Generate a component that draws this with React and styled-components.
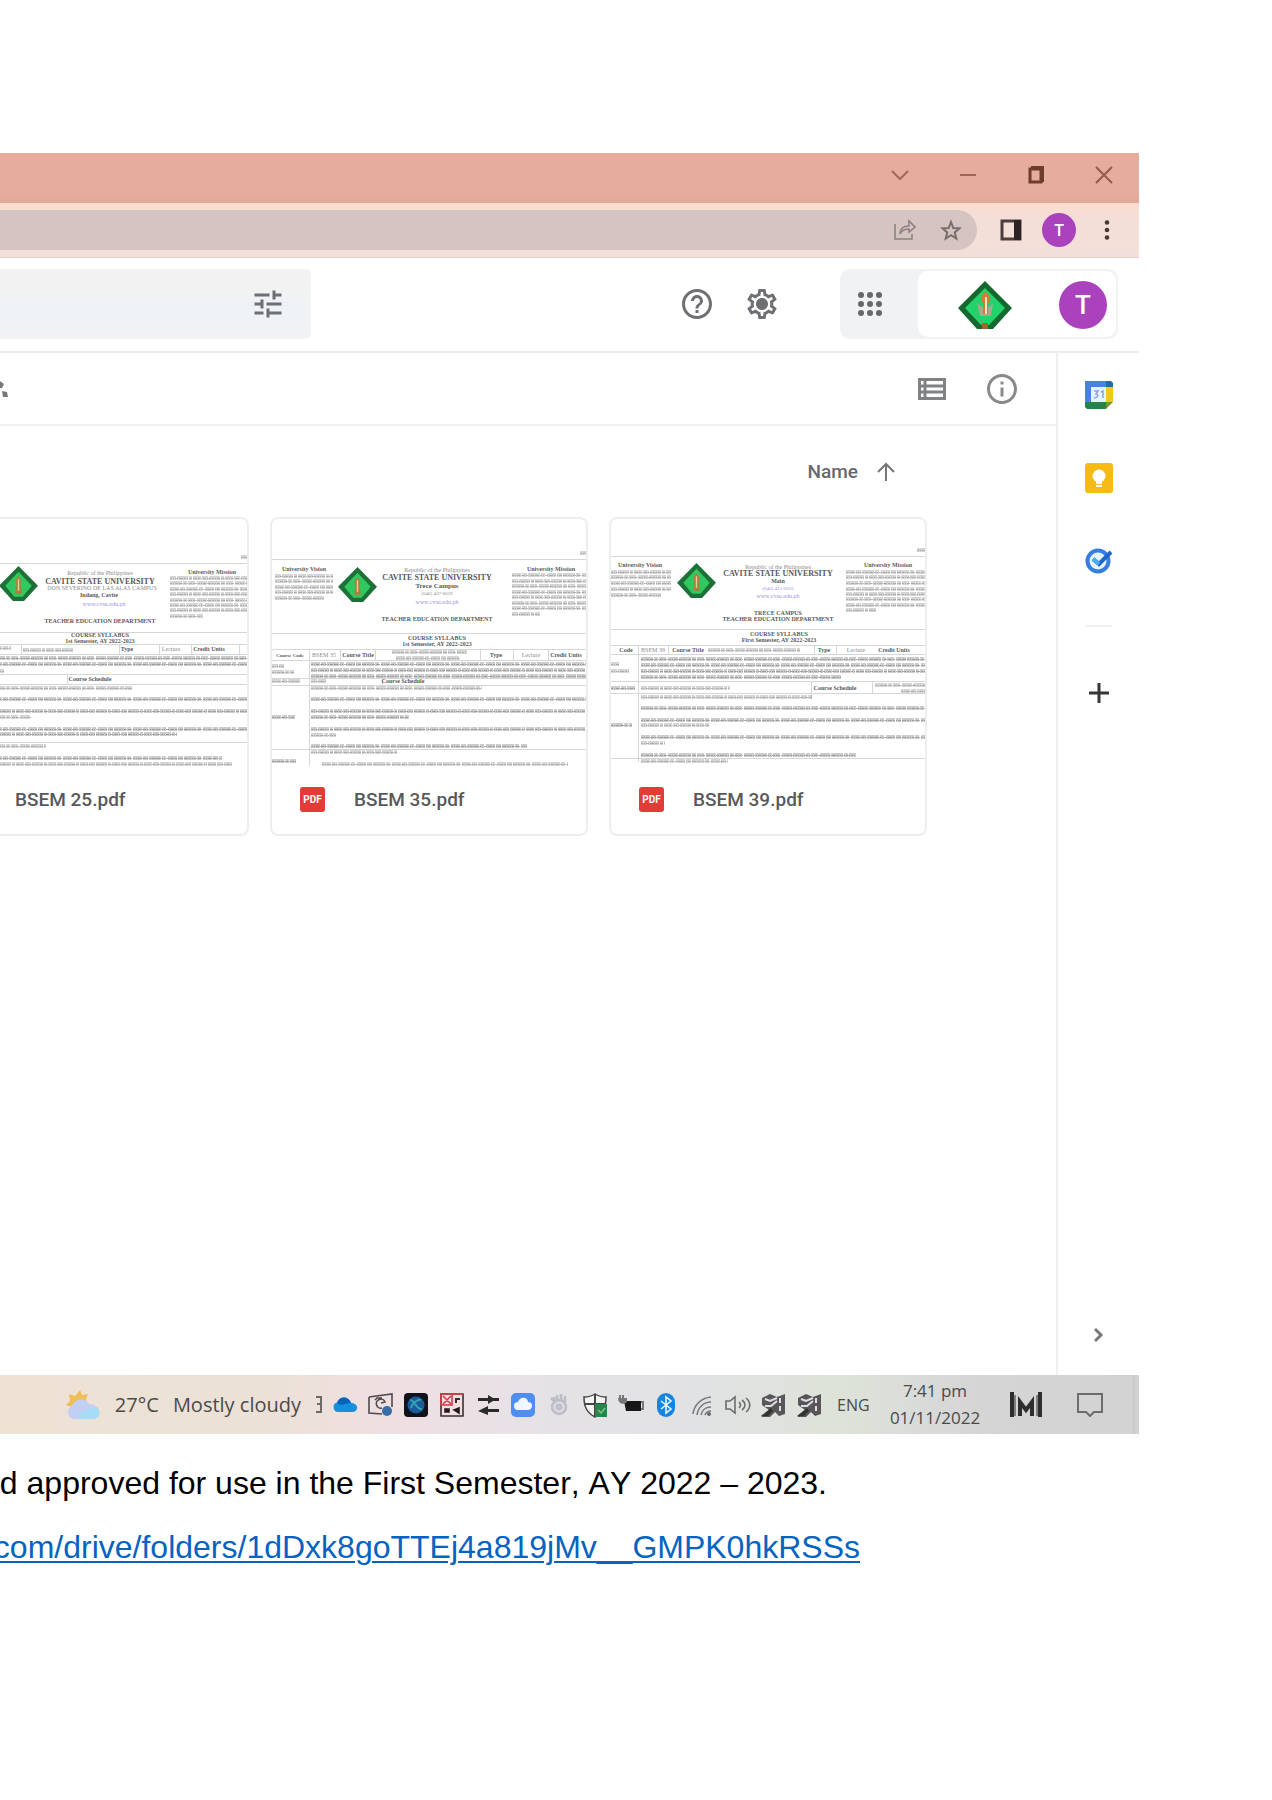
import React from "react";
import styled, { createGlobalStyle } from "styled-components";
import { MdTune, MdHelpOutline, MdOutlineSettings, MdInfoOutline } from "react-icons/md";

const GlobalStyle = createGlobalStyle`
  * { box-sizing: border-box; }
  html, body { margin: 0; background: #fff; }
  body { font-family: Roboto, "Liberation Sans", sans-serif; color: #5f6368; overflow-x: hidden; }
  svg { display: block; flex: none; }
`;

const Page = styled.main`
  min-height: 1800px;
  padding-top: 153px;
  overflow: hidden;
`;

const BrowserWindow = styled.section`
  width: calc(100% - 133px);
  background: #fff;
`;

const IconButton = styled.button`
  display: flex;
  align-items: center;
  justify-content: center;
  flex: none;
  width: ${(p) => p.$w || 48}px;
  height: ${(p) => p.$h || 48}px;
  padding: 0;
  border: 0;
  background: transparent;
  color: ${(p) => p.$color || "#6d6f72"};
`;

const TitleBar = styled.header`
  display: flex;
  justify-content: flex-end;
  align-items: center;
  height: 50px;
  padding: 0 1px 6px 0;
  background: linear-gradient(#e6ac9c 0 80%, #dfa995);
`;

const AddressRow = styled.div`
  display: flex;
  align-items: center;
  gap: 10px;
  height: 55px;
  padding-right: 8px;
  background: linear-gradient(#fbddcd, #f5ded8 25%, #f3dfd9);
  border-bottom: 1px solid #e3cfc8;
`;

const AddressPill = styled.div`
  display: flex;
  align-items: center;
  flex: 1;
  height: 40px;
  padding-right: 3px;
  border-radius: 0 20px 20px 0;
  background: #d5c4c2;
`;

const BrowserActions = styled.div`
  display: flex;
`;

const BareInput = styled.input`
  flex: 1;
  min-width: 0;
  height: 100%;
  border: 0;
  outline: 0;
  background: transparent;
  font: 20px Roboto, sans-serif;
`;

const Avatar = styled.span`
  display: flex;
  align-items: center;
  justify-content: center;
  width: ${(p) => p.$size}px;
  height: ${(p) => p.$size}px;
  border-radius: 50%;
  background: #ab42bd;
  color: #fff;
  font-family: Roboto, sans-serif;
  font-weight: 500;
  font-size: ${(p) => (p.$size > 40 ? 26 : 16)}px;
`;

const DriveHeader = styled.div`
  display: flex;
  align-items: center;
  height: 95px;
  padding: 0 21px 2px 0;
  border-bottom: 2px solid #ededee;
`;

const SearchBox = styled.div`
  display: flex;
  align-items: center;
  width: 311px;
  height: 70px;
  padding-right: 19px;
  border-radius: 0 6px 6px 0;
  background: linear-gradient(#f2f2f2 0 30%, #eff3f5 40% 85%, #f2f2f2);
`;

const HeaderActions = styled.div`
  display: flex;
  margin: 0 46px 0 auto;
`;

const AccountGroup = styled.div`
  display: flex;
  width: 278px;
  height: 70px;
  padding: 2px;
  border-radius: 10px;
  background: #f0f2f3;
`;

const AccountPanel = styled.div`
  display: flex;
  align-items: center;
  flex: 1;
  margin-left: 20px;
  justify-content: flex-end;
  gap: 46px;
  padding: 3px 9px 0 0;
  border-radius: 10px;
  background: #fff;
`;

const DriveBody = styled.div`
  display: flex;
  height: 1022px;
`;

const Content = styled.div`
  flex: 1;
  min-width: 0;
  border-right: 2px solid #efefef;
`;

const Toolbar = styled.div`
  display: flex;
  align-items: center;
  height: 73px;
  padding-right: 19px;
  border-bottom: 2px solid #f0f0f0;
`;

const ToolbarEnd = styled.div`
  display: flex;
  margin-left: auto;
`;

const SortRow = styled.div`
  display: flex;
  justify-content: flex-end;
  align-items: center;
  height: 91px;
  padding-right: 159px;
`;

const SortButton = styled.button`
  display: flex;
  align-items: center;
  gap: 17px;
  padding: 0;
  border: 0;
  background: transparent;
  color: #68696c;
  font: 500 19px/24px Roboto, sans-serif;
`;

const FileGrid = styled.ul`
  display: flex;
  gap: 21px;
  margin: 0 0 0 -69px;
  padding: 0;
  list-style: none;
`;

const FileCard = styled.li`
  flex: none;
  width: 318px;
  height: 319px;
  overflow: hidden;
  border: 2px solid #eeeeef;
  border-radius: 8px;
`;

const FileCaption = styled.div`
  display: flex;
  align-items: center;
  gap: 29px;
  height: 68px;
  padding: 0 0 1px 28px;
  color: #58595b;
  font: 500 19px/24px Roboto, sans-serif;
`;

const PdfBadge = styled.span`
  display: flex;
  align-items: center;
  justify-content: center;
  width: 25px;
  height: 25px;
  border-radius: 3px;
  background: #e33b38;
  color: #fff;
  font: 700 10px/12px Roboto, sans-serif;
`;

const SidePanel = styled.aside`
  display: flex;
  flex-direction: column;
  align-items: center;
  width: 81px;
  padding-bottom: 16px;
`;

const AppLinks = styled.nav`
  display: flex;
  flex-direction: column;
`;

const Divider = styled.hr`
  width: 27px;
  height: 2px;
  margin: 24px 0 22px;
  border: 0;
  background: #f1f1f1;
`;

const Spacer = styled.div`
  flex: 1;
`;

const Taskbar = styled.footer`
  display: flex;
  justify-content: flex-end;
  align-items: center;
  height: 59px;
  background: linear-gradient(90deg, #ede2d4 0%, #ece1d7 24%, #efdfe3 36%, #e5e2e6 48%, #e1e2e3 62%, #dde3d8 74%, #dadcd9 80%, #d5d5d5 86%, #d2d2d2 100%);
  color: #4c4a48;
  font: 20px/26px "Open Sans", "Noto Sans", sans-serif;
`;

const Weather = styled.div`
  display: flex;
  align-items: center;
  gap: 14px;
  white-space: nowrap;
`;

const Tray = styled.div`
  display: flex;
  align-items: center;
  justify-content: space-between;
  width: 490px;
  margin: 0 15px 0 9px;
`;

const Language = styled.span`
  width: 34px;
  font-size: 16px;
`;

const Clock = styled.time`
  width: 92px;
  margin: 0 28px 0 18px;
  padding-bottom: 2px;
  text-align: center;
  font-size: 17px;
  line-height: 27px;
  white-space: nowrap;
`;

const TaskbarEnd = styled.div`
  display: flex;
  align-items: center;
  gap: 32px;
`;

const PeekEdge = styled.div`
  width: 6px;
  height: 59px;
  margin-left: 28px;
  border-left: 2px solid #c9c9c9;
`;

const DocumentText = styled.p`
  display: flex;
  justify-content: flex-end;
  width: ${(p) => p.$end}px;
  margin: ${(p) => p.$top}px 0 0;
  color: #000;
  font: 32px/40px "Liberation Sans", Arial, sans-serif;
  font-kerning: none;
  white-space: nowrap;
`;

const DocLink = styled.a`
  color: #0563c1;
  text-decoration: underline;
  text-decoration-thickness: 2px;
  text-underline-offset: 3px;
`;

function Emblem() {
  return (
    <svg width="56" height="48" viewBox="0 0 56 48" aria-hidden="true">
      <path d="M28 0 55 27 36 48H20L1 27Z" fill="#14692f" />
      <path d="M28 7 48 27 32 44h-8L8 27Z" fill="#21d36b" />
      <path d="m20 22 5 4h7l4-4-2 13H23Z" fill="#a5a98d" />
      <path d="M28 11c6 3 7 8 3 12v10h-5V22c-3-3-2-8 2-11Z" fill="#d87a35" />
      <path d="M29 16v17" stroke="#f5e6bb" strokeWidth="2" />
      <path d="M25 42h6v6h-6Z" fill="#a5632a" />
    </svg>
  );
}

function SettingsIcon() {
  return (
    <svg width="36" height="36" viewBox="0 0 24 24">
      <MdOutlineSettings size={24} />
      <circle cx="12" cy="12" r="3" fill="currentColor" />
    </svg>
  );
}

const greekDash = ["9 1 5 1 12 1 4 2", "6 1 11 1 3 1 8 1", "12 1 4 1 7 2 10 1"];

function Lines({ rows }) {
  return rows.map(([x1, x2, y, strong], i) => (
    <g key={i} stroke={strong ? "#858588" : "#9a9a9d"}>
      <path d={`M${x1} ${y}H${x2}`} strokeWidth="4" strokeOpacity=".42" strokeDasharray={greekDash[i % 3]} />
      <path d={`M${x1} ${y + 0.5}H${x2}`} strokeWidth="1" strokeOpacity=".65" strokeDasharray="2 1 1 1 3 1 4 1" />
    </g>
  ));
}

function Rules({ h, v }) {
  return (
    <g stroke="#d3d7d9">
      {h.map(([x1, x2, y]) => <path key={`${x1}-${y}`} d={`M${x1} ${y + 0.5}H${x2}`} />)}
      {v.map(([x, y1, y2]) => <path key={`${x}-${y1}v`} d={`M${x + 0.5} ${y1}V${y2}`} />)}
    </g>
  );
}

function Heads({ items }) {
  return items.map(([text, x, y, size, kind]) => (
    <text
      key={`${text}${y}`}
      x={x}
      y={y}
      fontSize={size}
      textAnchor="middle"
      fontWeight={kind === "b" ? 700 : 400}
      fill={kind === "l" ? "#9a94e6" : kind === "b" ? "#5a5a5c" : "#8b8b8e"}
    >
      {text}
    </text>
  ));
}

const column = (x1, x2, ys, last) => ys.map((y, i) => [x1, i === ys.length - 1 ? last : x2, y]);

const files = [
  {
    name: "BSEM 25.pdf",
    offscreenBadge: true,
    logo: 47,
    heads: [
      ["Republic of the Philippines", 167, 56, 6],
      ["CAVITE STATE UNIVERSITY", 167, 65, 8, "b"],
      ["DON SEVERINO DE LAS ALAS CAMPUS", 169, 71, 6],
      ["Indang, Cavite", 166, 78, 6, "b"],
      ["www.cvsu.edu.ph", 171, 87, 6, "l"],
      ["TEACHER EDUCATION DEPARTMENT", 167, 104, 6, "b"],
      ["University Mission", 279, 55, 6, "b"],
      ["COURSE SYLLABUS", 167, 118, 6, "b"],
      ["1st Semester, AY 2022-2023", 167, 124, 6, "b"],
      ["Type", 194, 132, 6, "b"],
      ["Lecture", 238, 132, 6],
      ["Credit Units", 276, 132, 6, "b"],
      ["Course Schedule", 157, 162, 6, "b"],
    ],
    lines: [
      [308, 316, 38],
      ...column(237, 316, [59, 64, 70, 75, 81, 86, 91, 97], 270),
      [60, 78, 129], [90, 140, 131], [60, 314, 139, 1], [60, 316, 145, 1], [60, 71, 152],
      [60, 199, 169], [60, 316, 180, 1], [60, 316, 192, 1], [60, 98, 198],
      [60, 315, 210, 1], [60, 244, 215, 1], [60, 113, 227], [60, 289, 239, 1], [60, 299, 245],
    ],
    h: [[0, 317, 44], [0, 317, 113], [0, 317, 125], [0, 317, 135], [0, 317, 155], [0, 317, 165], [0, 317, 223]],
    v: [[88, 125, 135], [186, 125, 135], [226, 125, 135], [258, 125, 135], [306, 125, 135], [134, 155, 165]],
  },
  {
    name: "BSEM 35.pdf",
    logo: 48,
    heads: [
      ["University Vision", 32, 52, 6, "b"],
      ["Republic of the Philippines", 165, 53, 6],
      ["CAVITE STATE UNIVERSITY", 165, 61, 8, "b"],
      ["Trece Campus", 165, 69, 7, "b"],
      ["(046) 437-6659", 165, 76, 5],
      ["www.cvsu.edu.ph", 165, 85, 6, "l"],
      ["TEACHER EDUCATION DEPARTMENT", 165, 102, 6, "b"],
      ["University Mission", 279, 52, 6, "b"],
      ["COURSE SYLLABUS", 165, 121, 6, "b"],
      ["1st Semester, AY 2022-2023", 165, 127, 6, "b"],
      ["Course Code", 18, 138, 5, "b"],
      ["BSEM 35", 52, 138, 6],
      ["Course Title", 86, 138, 6, "b"],
      ["Type", 224, 138, 6, "b"],
      ["Lecture", 259, 138, 6],
      ["Credit Units", 294, 138, 6, "b"],
      ["Course Schedule", 131, 164, 6, "b"],
    ],
    lines: [
      [308, 316, 34],
      ...column(3, 61, [57, 62, 68, 73, 79], 52),
      ...column(240, 316, [56, 62, 67, 73, 78, 84, 89, 95], 268),
      [120, 195, 133], [124, 188, 139], [0, 12, 147], [0, 22, 153], [39, 314, 145, 1], [39, 316, 151, 1], [39, 316, 157, 1],
      [0, 28, 162], [39, 54, 162], [39, 210, 169], [39, 315, 180, 1], [39, 315, 192, 1], [39, 137, 198, 1], [0, 23, 198, 1],
      [39, 315, 210, 1], [39, 64, 216], [39, 255, 227, 1], [39, 125, 233], [0, 24, 242, 1], [50, 296, 245],
    ],
    h: [[0, 317, 40], [0, 317, 114], [0, 317, 130], [0, 317, 141], [0, 317, 159], [0, 317, 166], [0, 317, 230]],
    v: [[37, 130, 247], [68, 130, 141], [103, 130, 141], [208, 130, 141], [241, 130, 141], [276, 130, 141], [110, 159, 166]],
  },
  {
    name: "BSEM 39.pdf",
    logo: 44,
    heads: [
      ["University Vision", 29, 48, 6, "b"],
      ["Republic of the Philippines", 167, 50, 6],
      ["CAVITE STATE UNIVERSITY", 167, 57, 8, "b"],
      ["Main", 167, 64, 6, "b"],
      ["(046) 415-0010", 167, 71, 5, "l"],
      ["www.cvsu.edu.ph", 167, 79, 6, "l"],
      ["TRECE CAMPUS", 167, 96, 6, "b"],
      ["TEACHER EDUCATION DEPARTMENT", 167, 102, 6, "b"],
      ["University Mission", 277, 48, 6, "b"],
      ["COURSE SYLLABUS", 168, 117, 6, "b"],
      ["First Semester, AY 2022-2023", 168, 123, 6, "b"],
      ["Code", 15, 133, 6, "b"],
      ["BSEM 39", 42, 133, 6],
      ["Course Title", 77, 133, 6, "b"],
      ["Type", 213, 133, 6, "b"],
      ["Lecture", 245, 133, 6],
      ["Credit Units", 283, 133, 6, "b"],
      ["Course Schedule", 224, 171, 6, "b"],
    ],
    lines: [
      [306, 316, 31],
      ...column(0, 60, [53, 58, 64, 70, 76], 50),
      ...column(235, 316, [53, 58, 64, 70, 75, 80, 86, 91], 265),
      [97, 189, 131], [0, 8, 145], [0, 18, 152], [30, 316, 140, 1], [30, 316, 146, 1], [30, 316, 152, 1], [30, 230, 158, 1],
      [0, 24, 169, 1], [30, 119, 169], [264, 316, 166], [290, 316, 172],
      [30, 201, 178], [30, 315, 189, 1], [30, 316, 201, 1], [30, 98, 206], [0, 21, 206, 1],
      [30, 316, 218, 1], [30, 54, 224], [30, 245, 236, 1], [30, 117, 242],
    ],
    h: [[0, 317, 37], [0, 317, 110], [0, 317, 126], [0, 317, 135], [0, 317, 162], [0, 317, 174], [0, 317, 239]],
    v: [[27, 126, 243], [57, 126, 135], [203, 126, 135], [225, 126, 135], [200, 162, 180], [261, 162, 174]],
  },
];

function Thumbnail({ file }) {
  return (
    <svg width="317" height="247" viewBox="0 0 317 247" role="img" aria-label={`Preview of ${file.name}`} fontFamily="Liberation Serif, serif">
      <Rules h={file.h} v={file.v} />
      <Lines rows={file.lines} />
      <Heads items={file.heads} />
      <svg x="66" y={file.logo} width="39" height="35" viewBox="0 0 56 48" preserveAspectRatio="none">
        <path d="M28 0 56 27 36 48H20L0 27Z" fill="#1d7036" />
        <path d="M28 8 47 27 34 42H22L9 27Z" fill="#2fc95f" />
        <path d="M28 14c5 4 5 8 3 11l2 13H23l2-13c-2-3-2-7 3-11Z" fill="#a8813f" />
        <path d="M28 18v16" stroke="#e6cf9b" strokeWidth="2" />
      </svg>
    </svg>
  );
}

function DeviceIcon() {
  return (
    <svg width="26" height="26" viewBox="0 0 26 26">
      <path d="M2 6 10 2l7 3 8-3v20l-6 2-4-4-5 5H1l8-7-7-5Z" fill="#59565a" />
      <path d="m5 7 5 2 7-3M5 14h6l6-5M20 6v5M20 14v5" stroke="#dedee0" strokeWidth="2" fill="none" />
      <path d="m1 24 10-8 2 3-5 5Z" fill="#333" />
    </svg>
  );
}

const trayIcons = [
  ["OneDrive", <svg width="26" height="24" viewBox="0 0 26 24"><path d="M6 19a5 5 0 0 1-.7-9.8C7 5 12 3 16 6c1.500 1 2.500 2.500 3 4 8 0 8 9 1 9Z" fill="#1490df" /><path d="M5.300 9.200C7 5 12 3 16 6c1.500 1 2.500 2.500 3 4-5 0-8 3-13 1Z" fill="#0764b8" /></svg>],
  ["Screen capture", <svg width="26" height="26" viewBox="0 0 26 26" fill="none" stroke="#4f4a4c" strokeWidth="1.600"><path d="M1 5 24 2v13M1 5v16l13 1M14 16a4.500 4.500 0 1 1 3-6l-4 1M7 8l2-2h5" /><circle cx="19" cy="19" r="5" fill="#356fa5" stroke="none" /></svg>],
  ["Studio", <svg width="26" height="26" viewBox="0 0 26 26"><rect x="1" y="1" width="24" height="24" rx="4" fill="#11131b" /><circle cx="13" cy="13" r="8.500" fill="#1b5b9c" /><path d="M7 8c5 0 6 10 12 9M8 16c1-5 7-9 10-8" fill="none" stroke="#33a3b3" strokeWidth="2" /></svg>],
  ["Snippets", <svg width="26" height="26" viewBox="0 0 26 26" fill="none" strokeWidth="1.600"><path d="M2 2h22v22H2Z" stroke="#3a2d31" fill="#f2dfe0" /><path d="M2 2h11v11H2ZM4 4l8 8M12 4l-8 8M13 2h11" stroke="#dc3a49" /><path d="M17 11V7h4" stroke="#3a2d31" strokeWidth="2" /><path d="M6 17h4v3H6ZM15 18l5-2v5Z" fill="#241b1e" stroke="#241b1e" /></svg>],
  ["Transfer", <svg width="26" height="26" viewBox="0 0 26 26" fill="#2a2a2a"><path d="M3 6h10V3l5 3h6v3h-6l-5 3V9H3ZM24 20H13v3l-10-4 10-5v3h11Z" /></svg>],
  ["Cloud sync", <svg width="26" height="26" viewBox="0 0 26 26"><rect x="1" y="1" width="24" height="24" rx="5" fill="#4f8df0" /><path d="M8 18a4 4 0 0 1 0-8c2-6 10-5 10 0 6 0 5 8 0 8Z" fill="#eef6ff" /></svg>],
  ["Touch", <svg width="26" height="26" viewBox="0 0 26 26" fill="none" stroke="#bdbdc7" strokeWidth="2.500"><path d="M5 6l3 3V5M11 3v6M15 2v6M19 4v6" /><circle cx="13" cy="15" r="7" fill="#dadae2" /><circle cx="13" cy="15" r="2" /></svg>],
  ["Security", <svg width="26" height="26" viewBox="0 0 26 26"><path d="M13 2c3 2 7 3 11 3 0 9-2 15-11 20C4 20 2 14 2 5c4 0 8-1 11-3Z" fill="#f1f4f1" stroke="#444" strokeWidth="1.500" /><path d="M13 2v23M2 12h22" stroke="#444" strokeWidth="2" /><path d="M13 12h12v13H13Z" fill="#22874b" /><path d="m16 18 3 3 4-5" stroke="#7fc095" strokeWidth="1.500" fill="none" /></svg>],
  ["Battery", <svg width="26" height="26" viewBox="0 0 26 26"><path d="M6 9h17v10H8Z" fill="#171717" /><path d="M23 10h2v7h-2M2 3v5M5 3v5" stroke="#777" strokeWidth="2" fill="none" /><path d="M0 6h9v4c-4 4-9 1-9-4Z" fill="#777" /></svg>],
  ["Bluetooth", <svg width="26" height="26" viewBox="0 0 26 26"><rect x="4" y="1" width="18" height="24" rx="9" fill="#1685df" /><path d="m8 9 10 8-5 4V5l5 4-10 8" fill="none" stroke="#e9f5ff" strokeWidth="1.600" /></svg>],
  ["Wi-Fi", <svg width="26" height="26" viewBox="0 0 26 26" fill="none" stroke="#7a7b7c" strokeWidth="1.600"><path d="M4 22C5 13 12 6 22 5M8 23c1-8 7-13 14-13M12 23c1-5 5-8 10-8M16 23c1-3 3-4 6-4" /><circle cx="20" cy="22" r="2" fill="#68696b" stroke="none" /></svg>],
  ["Volume", <svg width="26" height="26" viewBox="0 0 26 26" fill="none" stroke="#6b6c6c" strokeWidth="1.600"><path d="M1 9h4l5-4v16l-5-4H1ZM14 10c2 2 2 4 0 6M17 8c4 3 4 7 0 10M21 6c5 4 5 10 0 14" /></svg>],
  ["Device one", <DeviceIcon />],
  ["Device two", <DeviceIcon />],
];

export default function App() {
  return (
    <Page>
      <GlobalStyle />
      <BrowserWindow>
        <TitleBar>
          <IconButton $w={68} $h={44} aria-label="Search tabs">
            <svg width="18" height="12" viewBox="0 0 18 12" fill="none" stroke="#a56a5c" strokeWidth="2"><path d="m1 2 8 8 8-8" /></svg>
          </IconButton>
          <IconButton $w={68} $h={44} aria-label="Minimize">
            <svg width="18" height="4" viewBox="0 0 18 4" stroke="#a0665a" strokeWidth="2"><path d="M1 2h16" /></svg>
          </IconButton>
          <IconButton $w={68} $h={44} aria-label="Restore">
            <svg width="18" height="20" viewBox="0 0 18 20" fill="none" stroke="#6e3c2b"><path d="M3 4h11v13H3Z" strokeWidth="3" /><path d="M4 2h12v15" strokeWidth="2" /></svg>
          </IconButton>
          <IconButton $w={68} $h={44} aria-label="Close">
            <svg width="18" height="18" viewBox="0 0 18 18" stroke="#935a4d" strokeWidth="2"><path d="m1 1 16 16M17 1 1 17" /></svg>
          </IconButton>
        </TitleBar>

        <AddressRow>
          <AddressPill>
            <BareInput aria-label="Address" />
            <IconButton $w={46} $h={40} aria-label="Share this page">
              <svg width="22" height="22" viewBox="0 0 22 22" fill="none" stroke="#8d8382" strokeWidth="1.600"><path d="M1 5v15h17v-5M6 15c0-6 4-8 9-8V2l6 6-6 5v-3c-4 0-7 1-9 5Z" /></svg>
            </IconButton>
            <IconButton $w={46} $h={40} aria-label="Bookmark this page">
              <svg width="22" height="22" viewBox="0 0 22 22" fill="none" stroke="#766e6d" strokeWidth="2"><path d="m11 3 2.300 6 6.200.4-4.800 4 1.600 6.100-5.300-3.400-5.300 3.400 1.600-6.100-4.800-4 6.200-.4Z" /></svg>
            </IconButton>
          </AddressPill>
          <BrowserActions>
            <IconButton aria-label="Side panel">
              <svg width="22" height="22" viewBox="0 0 22 22"><path d="M2 2h18v18H2Z" fill="none" stroke="#4c3e3c" strokeWidth="3" /><path d="M14 1h7v20h-7Z" fill="#2a2424" /></svg>
            </IconButton>
            <IconButton aria-label="Profile"><Avatar $size={34}>T</Avatar></IconButton>
            <IconButton aria-label="Browser menu">
              <svg width="6" height="20" viewBox="0 0 6 20" fill="#443a39"><circle cx="3" cy="2.500" r="2.300" /><circle cx="3" cy="10" r="2.300" /><circle cx="3" cy="17.500" r="2.300" /></svg>
            </IconButton>
          </BrowserActions>
        </AddressRow>

        <DriveHeader>
          <SearchBox>
            <BareInput aria-label="Search in Drive" />
            <IconButton aria-label="Advanced search"><MdTune size={36} /></IconButton>
          </SearchBox>
          <HeaderActions>
            <IconButton $w={65} aria-label="Help"><MdHelpOutline size={36} /></IconButton>
            <IconButton $w={65} aria-label="Settings"><SettingsIcon /></IconButton>
          </HeaderActions>
          <AccountGroup>
            <IconButton $w={56} $h={66} aria-label="Google apps">
              <svg width="26" height="26" viewBox="0 0 26 26" fill="#66696c">
                {[4, 13, 22].map((y) => [4, 13, 22].map((x) => <circle key={`${x}-${y}`} cx={x} cy={y} r="3" />))}
              </svg>
            </IconButton>
            <AccountPanel>
              <Emblem />
              <Avatar $size={48}>T</Avatar>
            </AccountPanel>
          </AccountGroup>
        </DriveHeader>

        <DriveBody>
          <Content>
            <Toolbar>
              <svg width="8" height="18" viewBox="0 0 8 18" fill="#77787a" aria-hidden="true"><path d="M0 1l4 3-2 4H0ZM2 11l5 1 1 5H3Z" /></svg>
              <ToolbarEnd>
                <IconButton $w={70} aria-label="List layout">
                  <svg width="28" height="22" viewBox="0 0 28 22" fill="none" stroke="#808284" strokeWidth="3"><path d="M1.500 1.500h25v19h-25ZM7 1v20M2 8h24M2 14h24" /></svg>
                </IconButton>
                <IconButton $w={70} $color="#88898b" aria-label="View details"><MdInfoOutline size={36} /></IconButton>
              </ToolbarEnd>
            </Toolbar>
            <SortRow>
              <SortButton>
                Name
                <svg width="22" height="20" viewBox="0 0 22 20" fill="none" stroke="#747678" strokeWidth="2"><path d="M11 19V2M3 10l8-8 8 8" /></svg>
              </SortButton>
            </SortRow>
            <FileGrid>
              {files.map((file) => (
                <FileCard key={file.name}>
                  <Thumbnail file={file} />
                  <FileCaption>
                    <PdfBadge>{file.offscreenBadge ? null : "PDF"}</PdfBadge>
                    {file.name}
                  </FileCaption>
                </FileCard>
              ))}
            </FileGrid>
          </Content>
          <SidePanel>
            <AppLinks aria-label="Companion apps">
              <IconButton $h={83} aria-label="Calendar">
                <svg width="28" height="28" viewBox="0 0 28 28"><path d="M0 0h21v6H6v15H0Z" fill="#4a80e8" /><path d="M21 0h5l2 2v5h-7Z" fill="#2864b4" /><path d="M21 6h7v15h-7Z" fill="#f4c51c" /><path d="M0 21h21v7H2l-2-2Z" fill="#258347" /><path d="M21 21h7l-7 7Z" fill="#6c9a2e" /><path d="M6 6h15v15H6Z" fill="#e2f6ff" /><path d="M9 10h4l-2 3c3 0 2 4-2 4M16 11l2-1v7" fill="none" stroke="#91a0dc" strokeWidth="1.500" /></svg>
              </IconButton>
              <IconButton $h={83} aria-label="Keep">
                <svg width="28" height="30" viewBox="0 0 28 30"><rect width="28" height="30" rx="3" fill="#f6ba15" /><circle cx="14" cy="13" r="6.500" fill="#fff" /><path d="M11 18h6v3h-6ZM11 22h6v2h-6Z" fill="#fff" /></svg>
              </IconButton>
              <IconButton $h={82} aria-label="Tasks">
                <svg width="28" height="28" viewBox="0 0 28 28" fill="none"><circle cx="13" cy="15" r="10.500" fill="#e3f4ff" stroke="#377de0" strokeWidth="4" /><path d="m8 13 6 5L26 6" stroke="#1e65c7" strokeWidth="4" /><path d="m8 13 6 5" stroke="#4daaf2" strokeWidth="4" /></svg>
              </IconButton>
            </AppLinks>
            <Divider />
            <IconButton $h={88} aria-label="Get add-ons">
              <svg width="22" height="22" viewBox="0 0 22 22" stroke="#373838" strokeWidth="3"><path d="M11 1v20M1 11h20" /></svg>
            </IconButton>
            <Spacer />
            <IconButton aria-label="Hide side panel">
              <svg width="10" height="16" viewBox="0 0 10 16" fill="none" stroke="#77787a" strokeWidth="3"><path d="m1 2 6 6-6 6" /></svg>
            </IconButton>
          </SidePanel>
        </DriveBody>

        <Taskbar>
          <Weather>
            <svg width="36" height="32" viewBox="0 0 36 32" aria-hidden="true"><path d="m15 1 2 5 6-1-2 5 2 5-7 6-9-3-6-2 4-4-1-7 6 2Z" fill="#f0bd58" /><path d="M8 30a7 7 0 0 1-1-13c3-8 14-9 17-2 12 0 14 14 4 15Z" fill="#c4cdf4" /><path d="M12 30c3-7 9-10 20-12 4 5 3 12-4 12Z" fill="#a5dcf6" /></svg>
            <span>27°C</span>
            <span>Mostly cloudy</span>
            <svg width="8" height="20" viewBox="0 0 8 20" fill="none" stroke="#6d6b68" strokeWidth="2" aria-hidden="true"><path d="M1 2h5v15H1M2 9h4" /></svg>
          </Weather>
          <Tray>
            {trayIcons.map(([label, icon]) => <IconButton key={label} $w={26} $h={40} aria-label={label}>{icon}</IconButton>)}
          </Tray>
          <Language>ENG</Language>
          <Clock>7:41 pm<br />01/11/2022</Clock>
          <TaskbarEnd>
            <IconButton $w={34} aria-label="Monitor">
              <svg width="34" height="28" viewBox="0 0 34 28" fill="none" stroke="#2e2e2e"><path d="M3 1v25M31 1v25" strokeWidth="4" /><path d="M6 4v21M28 4v21" strokeWidth="1" /><path d="M11 25V11l6 8 6-8v14" strokeWidth="4" /></svg>
            </IconButton>
            <IconButton $w={30} aria-label="Notifications">
              <svg width="26" height="24" viewBox="0 0 26 24" fill="none" stroke="#6c6c6c" strokeWidth="2"><path d="M1 1h24v18h-8l-4 4-4-4H1Z" /></svg>
            </IconButton>
          </TaskbarEnd>
          <PeekEdge />
        </Taskbar>
      </BrowserWindow>

      <DocumentText $end={827} $top={29}>d approved for use in the First Semester, AY 2022 – 2023.</DocumentText>
      <DocumentText $end={860} $top={24}>
        <DocLink href="#folder">com/drive/folders/1dDxk8goTTEj4a819jMv__GMPK0hkRSSs</DocLink>
      </DocumentText>
    </Page>
  );
}
